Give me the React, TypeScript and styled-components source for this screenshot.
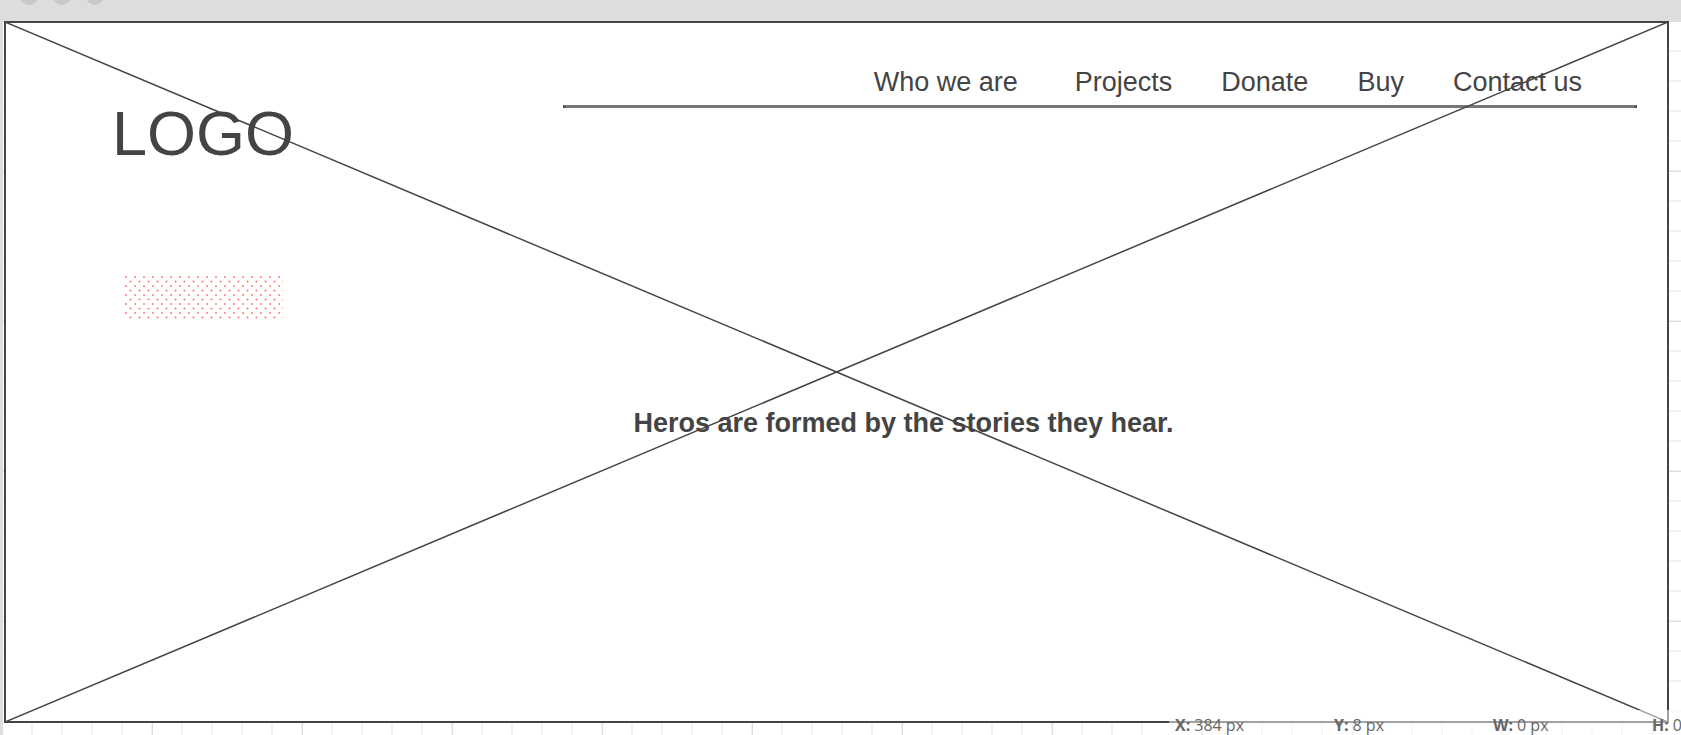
import React from "react";
import styled, { createGlobalStyle } from "styled-components";

const ink = "#444444";

const GlobalStyle = createGlobalStyle`
  *, *::before, *::after { box-sizing: border-box; }
  body {
    margin: 0;
    background: #ffffff;
    color: ${ink};
    font-family: "Liberation Sans", Arial, sans-serif;
  }
`;

const Page = styled.div`
  position: relative;
  display: flex;
  flex-direction: column;
  min-height: 100vh;
  overflow: hidden;
`;

const TitleBar = styled.div`
  display: flex;
  gap: 15px;
  height: 21px;
  padding-left: 20px;
  overflow: hidden;
  background: #dddddd;
`;

const WindowDot = styled.span`
  width: 18px;
  height: 18px;
  margin-top: -13px;
  border-radius: 50%;
  background: #c9c9c9;
`;

const Canvas = styled.div`
  flex: 1;
  display: flex;
  padding: 0 12px 12px 2px;
  border-left: 2px solid #dddddd;
  background-color: #ffffff;
  background-image:
    linear-gradient(to right, transparent 149px, #dddddd 149px),
    linear-gradient(to bottom, transparent 149px, #dddddd 149px),
    linear-gradient(to right, transparent 28px, #f2f2f2 28px),
    linear-gradient(to bottom, transparent 28px, #f2f2f2 28px);
  background-size: 150px 150px, 150px 150px, 30px 30px, 30px 30px;
  background-position: 1px 1px;
`;

const Frame = styled.main`
  position: relative;
  flex: 1;
  border: 2px solid ${ink};
  background: #ffffff;
`;

const Cross = styled.svg`
  position: absolute;
  inset: -1px;
  width: calc(100% + 2px);
  height: calc(100% + 2px);
  pointer-events: none;
`;

const Header = styled.header`
  display: grid;
  grid-template-columns: 557px 1fr;
  padding-right: 30px;
`;

const Brand = styled.div`
  padding: 74px 0 0 106px;
`;

const Logo = styled.a`
  display: block;
  color: inherit;
  font-size: 63px;
  line-height: 72px;
  text-decoration: none;
`;

const DotField = styled.svg`
  display: block;
  width: 158px;
  height: 43px;
  margin: 107px 0 0 13px;
`;

const Nav = styled.nav`
  padding-top: 43px;
`;

const NavList = styled.ul`
  display: flex;
  justify-content: flex-end;
  gap: 49px;
  margin: 0;
  padding: 0 55px 7px 0;
  list-style: none;
`;

const NavItem = styled.li<{ $lead?: boolean }>`
  margin-right: ${({ $lead }) => ($lead ? "8px" : "0")};
`;

const NavLink = styled.a`
  display: block;
  color: inherit;
  font-size: 27px;
  line-height: 32px;
  text-decoration: none;
  white-space: nowrap;
`;

const Rule = styled.hr`
  height: 0;
  margin: 0;
  border: solid ${ink};
  border-width: 3px 3px 0;
  border-top-color: #777777;
`;

const Headline = styled.h1`
  margin: 88px 0 0;
  padding-left: 134px;
  font-size: 27px;
  line-height: 32px;
  text-align: center;
`;

const StatusBar = styled.dl`
  position: absolute;
  right: 0;
  bottom: 0;
  display: flex;
  width: 512px;
  height: 25px;
  margin: 0;
  padding-left: 6px;
  overflow: hidden;
  background: rgba(255, 255, 255, 0.5);
  color: #666666;
  font-family: "Open Sans", "Noto Sans", sans-serif;
  font-size: 16px;
  line-height: 30px;
`;

const Reading = styled.div`
  display: flex;
  flex: 0 0 159px;
  gap: 4px;
  white-space: nowrap;
`;

const Axis = styled.dt`
  font-weight: 700;
`;

const Value = styled.dd`
  margin: 0;
`;

const links = ["Who we are", "Projects", "Donate", "Buy", "Contact us"];

const readings = [
  ["X:", "384 px"],
  ["Y:", "8 px"],
  ["W:", "0 px"],
  ["H:", "0 px"],
];

export default function App() {
  return (
    <Page>
      <GlobalStyle />
      <TitleBar>
        <WindowDot />
        <WindowDot />
        <WindowDot />
      </TitleBar>
      <Canvas>
        <Frame>
          <Cross aria-hidden="true">
            <line x1="0" y1="0" x2="100%" y2="100%" stroke={ink} strokeWidth="1.5" />
            <line x1="0" y1="100%" x2="100%" y2="0" stroke={ink} strokeWidth="1.5" />
          </Cross>
          <Header>
            <Brand>
              <Logo href="#">LOGO</Logo>
              <DotField aria-hidden="true">
                <defs>
                  <pattern id="dots" width="9" height="9" patternUnits="userSpaceOnUse">
                    <circle cx="1" cy="1" r="1" fill="#f98270" />
                    <circle cx="5.5" cy="5.5" r="1.1" fill="#f98270" />
                  </pattern>
                </defs>
                <rect width="100%" height="100%" fill="url(#dots)" />
              </DotField>
            </Brand>
            <Nav>
              <NavList>
                {links.map((label, i) => (
                  <NavItem key={label} $lead={i === 0}>
                    <NavLink href="#">{label}</NavLink>
                  </NavItem>
                ))}
              </NavList>
              <Rule />
            </Nav>
          </Header>
          <Headline>Heros are formed by the stories they hear.</Headline>
        </Frame>
      </Canvas>
      <StatusBar>
        {readings.map(([axis, value]) => (
          <Reading key={axis}>
            <Axis>{axis}</Axis>
            <Value>{value}</Value>
          </Reading>
        ))}
      </StatusBar>
    </Page>
  );
}
